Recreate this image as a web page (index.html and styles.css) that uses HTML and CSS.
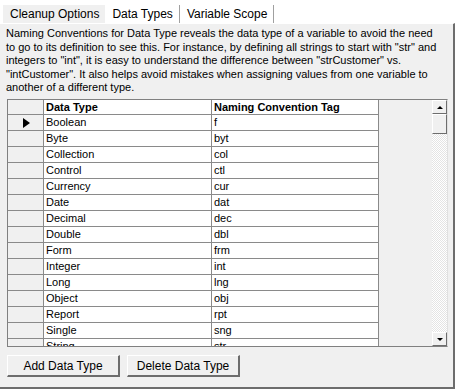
FILE: index.html
```html
<!DOCTYPE html>
<html lang="en">
<head>
    <meta charset="UTF-8">
    <title>Data Types</title>
    <link rel="stylesheet" href="styles.css">
</head>
<body>

    <div class="tabs">
        <div class="tab">Cleanup Options</div>
        <div class="tab active">Data Types</div>
        <div class="tab last">Variable Scope</div>
    </div>

    <div class="panel">
        <p class="intro">
            Naming Conventions for Data Type reveals the data type of a variable to avoid the need<br>
            to go to its definition to see this. For instance, by defining all strings to start with "str" and<br>
            integers to "int", it is easy to understand the difference between "strCustomer" vs.<br>
            "intCustomer". It also helps avoid mistakes when assigning values from one variable to<br>
            another of a different type.
        </p>

        <div class="grid">
            <div class="sheet" id="sheet">
                <div class="row head">
                    <div class="sel"></div>
                    <div class="cell">Data Type</div>
                    <div class="cell">Naming Convention Tag</div>
                </div>
            </div>
            <div class="scrollbar">
                <div class="sb-btn"><span class="arrow up"></span></div>
                <div class="sb-thumb"></div>
                <div class="sb-track"></div>
                <div class="sb-btn"><span class="arrow down"></span></div>
            </div>
        </div>

        <div class="buttons">
            <button>Add Data Type</button>
            <button>Delete Data Type</button>
        </div>
    </div>

    <script>
        var types = [
            ['Boolean', 'f'], ['Byte', 'byt'], ['Collection', 'col'], ['Control', 'ctl'],
            ['Currency', 'cur'], ['Date', 'dat'], ['Decimal', 'dec'], ['Double', 'dbl'],
            ['Form', 'frm'], ['Integer', 'int'], ['Long', 'lng'], ['Object', 'obj'],
            ['Report', 'rpt'], ['Single', 'sng'], ['String', 'str']
        ];

        var sheet = document.getElementById('sheet');
        types.forEach(function (t, i) {
            var row = document.createElement('div');
            row.className = 'row';
            row.innerHTML = '<div class="sel">' + (i === 0 ? '<span class="pointer"></span>' : '') + '</div>' +
                '<div class="cell">' + t[0] + '</div><div class="cell">' + t[1] + '</div>';
            sheet.appendChild(row);
        });
    </script>

</body>
</html>
```

FILE: styles.css
```css
body {
    margin: 0;
    background-color: #fff;
    font-family: 'Liberation Sans', Arial, sans-serif;
    font-size: 11px;
    color: #000;
    width: 458px;
}

/* tab strip */
.tabs {
    display: flex;
    align-items: flex-end;
    height: 23px;
    padding-left: 3px;
}

.tab {
    height: 18px;
    line-height: 18px;
    padding: 0 6px 0 7px;
    font-size: 12px;
    background-color: #f0f0f0;
}

.tab.active {
    background-color: #fff;
    border-right: 1px solid #a0a0a0;
}

.tab.last {
    background-color: #fff;
    border-right: 1px solid #a0a0a0;
}

/* panel */
.panel {
    width: 453px;
    height: 363px;
    background-color: #f0f0f0;
    border-top: 1px solid #fff;
    border-right: 2px solid #6d6d6d;
    border-bottom: 2px solid #6d6d6d;
}

.intro {
    margin: 0;
    padding: 3px 0 0 6px;
    height: 72px;
    line-height: 13.6px;
    white-space: nowrap;
}

/* datasheet */
.grid {
    display: flex;
    margin-left: 7px;
    width: 441px;
    height: 248px;
    border: 1px solid #808080;
    border-right-color: #e0e0e0;
    box-sizing: border-box;
}

.sheet {
    flex: 1;
    overflow: hidden;
    background-color: #f0f0f0;
}

.row {
    display: flex;
    height: 16px;
}

.row.head {
    height: 15px;
}

.sel,
.cell {
    box-sizing: border-box;
    border-right: 1px solid #8a8a8a;
    border-bottom: 1px solid #8a8a8a;
}

.sel {
    width: 36px;
    background-color: #f0f0f0;
    position: relative;
}

.cell {
    background-color: #fff;
    padding-left: 2px;
    line-height: 15px;
    white-space: nowrap;
}

.cell:nth-child(2) {
    width: 168px;
}

.cell:nth-child(3) {
    width: 167px;
}

.head .cell {
    font-weight: bold;
    line-height: 14px;
}

.pointer {
    position: absolute;
    left: 15px;
    top: 3px;
    border-left: 7px solid #000;
    border-top: 5px solid transparent;
    border-bottom: 5px solid transparent;
}

/* scrollbar */
.scrollbar {
    width: 15px;
    display: flex;
    flex-direction: column;
    background: repeating-conic-gradient(#fff 0 25%, #e4e4e4 0 50%) 0 0 / 2px 2px;
}

.sb-btn,
.sb-thumb {
    box-sizing: border-box;
    background-color: #f0f0f0;
    border-top: 1px solid #fff;
    border-left: 1px solid #fff;
    border-right: 1px solid #6d6d6d;
    border-bottom: 1px solid #6d6d6d;
}

.sb-btn {
    height: 14px;
    display: flex;
    align-items: center;
    justify-content: center;
}

.sb-thumb {
    height: 20px;
}

.sb-track {
    flex: 1;
}

.arrow {
    border-left: 3px solid transparent;
    border-right: 3px solid transparent;
}

.arrow.up {
    border-bottom: 3px solid #000;
}

.arrow.down {
    border-top: 3px solid #000;
}

/* buttons */
.buttons {
    display: flex;
    gap: 7px;
    margin: 8px 0 0 7px;
}

button {
    width: 113px;
    height: 22px;
    font-family: 'Liberation Sans', Arial, sans-serif;
    font-size: 12px;
    color: #000;
    background-color: #f0f0f0;
    border-top: 1px solid #fff;
    border-left: 1px solid #fff;
    border-right: 2px solid #6d6d6d;
    border-bottom: 2px solid #6d6d6d;
    padding: 0;
}
```
